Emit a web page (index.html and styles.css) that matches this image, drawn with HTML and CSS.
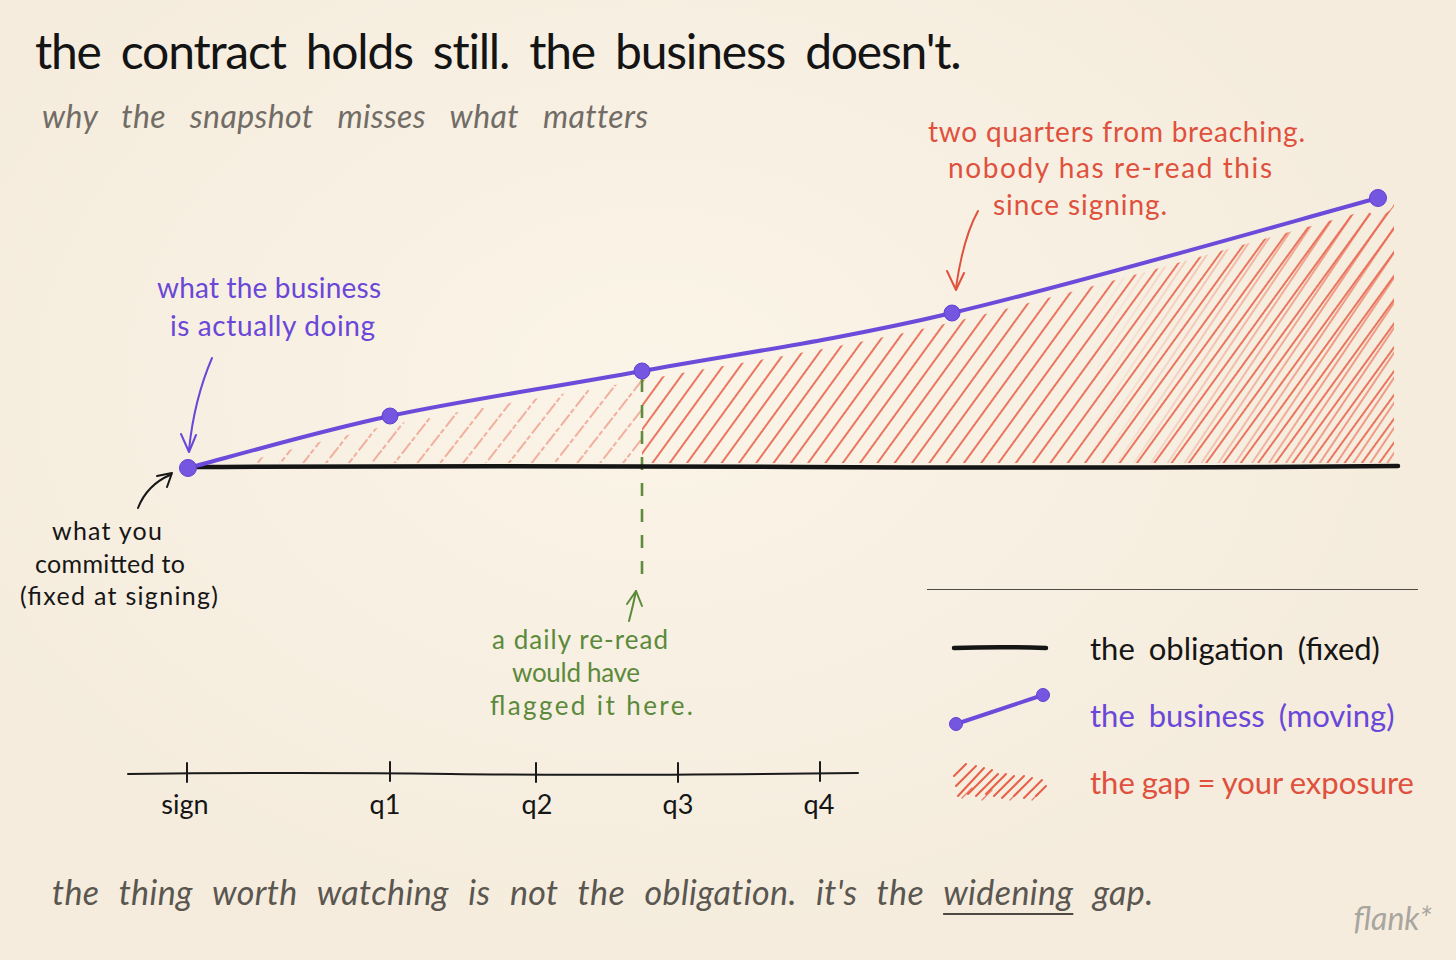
FILE: index.html
```html
<!DOCTYPE html>
<html lang="en">
<head>
<meta charset="utf-8">
<title>the contract holds still. the business doesn't.</title>
<link rel="stylesheet" href="styles.css">
</head>
<body>
<main class="sheet">
  <header class="head">
    <h1 class="title">the contract holds still. the business doesn't.</h1>
    <p class="subtitle">why the snapshot misses what matters</p>
  </header>

  <figure class="chart">
    <svg class="plot" width="1456" height="700" viewBox="0 150 1456 700" xmlns="http://www.w3.org/2000/svg">
      <defs>
        <pattern id="hA" width="18" height="24" patternUnits="userSpaceOnUse" patternTransform="rotate(38)">
          <line x1="2" y1="0" x2="2" y2="24" class="hatch-light"/>
        </pattern>
        <pattern id="hB" width="14" height="40" patternUnits="userSpaceOnUse" patternTransform="rotate(36)">
          <line x1="2" y1="0" x2="2" y2="40" class="hatch-strong"/>
        </pattern>
        <pattern id="hC" width="14" height="40" patternUnits="userSpaceOnUse" patternTransform="rotate(34)">
          <line x1="9" y1="0" x2="9" y2="40" class="hatch-extra"/>
        </pattern>
        <linearGradient id="fadeGrad" gradientUnits="userSpaceOnUse" x1="1090" y1="0" x2="1330" y2="0">
          <stop offset="0" stop-color="#000"/>
          <stop offset="1" stop-color="#fff"/>
        </linearGradient>
        <mask id="fadeMask" maskUnits="userSpaceOnUse" x="1000" y="150" width="456" height="400">
          <rect x="1000" y="150" width="456" height="400" fill="url(#fadeGrad)"/>
        </mask>
        <mask id="gapMask" maskUnits="userSpaceOnUse" x="0" y="150" width="1456" height="700">
          <path class="mask-fill" d="M188,468 C221.7,459.3 314.3,432.2 390,416 C465.7,399.8 548.3,388.2 642,371 C735.7,353.8 829.3,341.8 952,313 C1074.7,284.2 1307,217.2 1378,198 L1394,204 L1394,463 L188,463 Z"/>
          <path class="mask-cut" d="M188,468 C221.7,459.3 314.3,432.2 390,416 C465.7,399.8 548.3,388.2 642,371 C735.7,353.8 829.3,341.8 952,313 C1074.7,284.2 1307,217.2 1378,198"/>
          <circle cx="1378" cy="198" r="17" class="mask-dot"/>
        </mask>
      </defs>

      <!-- the gap -->
      <g mask="url(#gapMask)">
        <rect x="188" y="180" width="454" height="290" fill="url(#hA)" class="zone-light"/>
        <rect x="642" y="180" width="760" height="290" fill="url(#hB)"/>
        <rect x="1090" y="180" width="312" height="290" fill="url(#hC)" mask="url(#fadeMask)"/>
      </g>

      <!-- dashed re-read marker -->
      <path class="dash" d="M642,379 L642,581"/>

      <!-- obligation -->
      <path class="obligation" d="M188,467 Q500,465.5 800,467 T1398,466"/>

      <!-- business -->
      <path class="business" d="M188,468 C221.7,459.3 314.3,432.2 390,416 C465.7,399.8 548.3,388.2 642,371 C735.7,353.8 829.3,341.8 952,313 C1074.7,284.2 1307,217.2 1378,198"/>
      <circle class="dot" cx="188" cy="468" r="8.5"/>
      <circle class="dot" cx="390" cy="416" r="8"/>
      <circle class="dot" cx="642" cy="371" r="8"/>
      <circle class="dot" cx="952" cy="313" r="8"/>
      <circle class="dot" cx="1378" cy="198" r="8.5"/>

      <!-- red note -->
      <text class="note red" x="928" y="142" textLength="377" lengthAdjust="spacing">two quarters from breaching.</text>
      <text class="note red" x="948" y="178" textLength="324" lengthAdjust="spacing">nobody has re-read this</text>
      <text class="note red" x="993" y="215" textLength="174" lengthAdjust="spacing">since signing.</text>
      <path class="arrow red-stroke" d="M978,211 Q963,238 956,288"/>
      <path class="arrow red-stroke" d="M947,271 L956,290 L964,273"/>

      <!-- purple note -->
      <text class="note purple" x="157" y="298" textLength="224" lengthAdjust="spacing">what the business</text>
      <text class="note purple" x="170" y="336" textLength="205" lengthAdjust="spacing">is actually doing</text>
      <path class="arrow purple-stroke" d="M212,358 Q194,400 189,450"/>
      <path class="arrow purple-stroke" d="M181,434 L189,452 L196,435"/>

      <!-- black note -->
      <text class="note ink small" x="52" y="540" textLength="110" lengthAdjust="spacing">what you</text>
      <text class="note ink small" x="35" y="573" textLength="150" lengthAdjust="spacing">committed to</text>
      <text class="note ink small" x="20" y="605" textLength="198" lengthAdjust="spacing">(fixed at signing)</text>
      <path class="arrow ink-stroke" d="M138,508 Q147,485 170,475"/>
      <path class="arrow ink-stroke" d="M157,476 L172,473 L167,487"/>

      <!-- green note -->
      <text class="note green" x="492" y="649" textLength="176" lengthAdjust="spacing">a daily re-read</text>
      <text class="note green" x="512" y="682" textLength="128" lengthAdjust="spacing">would have</text>
      <text class="note green" x="490" y="715" textLength="203" lengthAdjust="spacing">flagged it here.</text>
      <path class="arrow green-stroke" d="M629,621 Q633,606 636,591"/>
      <path class="arrow green-stroke" d="M627,604 L636,591 L642,606"/>

      <!-- time axis -->
      <path class="axis" d="M128,774 Q300,772 450,774 T858,773"/>
      <path class="tick" d="M187,763 V782 M390,762 V781 M536,763 V782 M678,763 V782 M820,762 V781"/>
      <text class="axis-label" x="185" y="814" text-anchor="middle">sign</text>
      <text class="axis-label" x="385" y="814" text-anchor="middle">q1</text>
      <text class="axis-label" x="537" y="814" text-anchor="middle">q2</text>
      <text class="axis-label" x="678" y="814" text-anchor="middle">q3</text>
      <text class="axis-label" x="819" y="814" text-anchor="middle">q4</text>
    </svg>

    <ul class="legend">
      <li class="legend-row">
        <svg class="swatch" width="96" height="36" viewBox="0 0 96 36"><path class="sw-line" d="M2,18 Q48,16.5 94,18"/></svg>
        <span class="legend-text ink-text">the obligation (fixed)</span>
      </li>
      <li class="legend-row">
        <svg class="swatch" width="96" height="36" viewBox="0 0 96 36"><path class="sw-biz" d="M4,27 L91,-2"/><circle class="dot" cx="4" cy="27" r="6.5"/><circle class="dot" cx="91" cy="-2" r="6.5"/></svg>
        <span class="legend-text purple-text">the business (moving)</span>
      </li>
      <li class="legend-row">
        <svg class="swatch" width="96" height="36" viewBox="0 0 96 36">
          <path class="sw-hatch" d="M2,12 L14,0 M4,22 L24,2 M6,32 L32,4 M16,30 L40,6 M24,32 L46,10 M34,30 L54,10 M42,32 L62,12 M50,34 L72,12 M62,32 L80,14 M72,34 L90,16 M84,32 L94,22"/>
          <path class="sw-hatch thin" d="M10,34 L20,24 M30,36 L40,26 M58,36 L66,28 M80,36 L86,30"/>
        </svg>
        <span class="legend-text red-text tight">the gap = your exposure</span>
      </li>
    </ul>
  </figure>

  <footer class="foot">
    <p class="moral">the thing worth watching is not the obligation. it's the <span class="underlined">widening</span> gap.</p>
    <span class="sig">flank*</span>
  </footer>
</main>
</body>
</html>
```

FILE: styles.css
```css
* { box-sizing: border-box; }

html, body {
  margin: 0;
  padding: 0;
}

body {
  background: #f6eee0;
  font-family: Lato, "Open Sans", "DejaVu Sans", sans-serif;
  color: #151515;
}

.sheet {
  width: 1456px;
  height: 960px;
  display: grid;
  grid-template-rows: 150px 700px 110px;
  background:
    radial-gradient(ellipse at 45% 40%, rgba(255, 250, 240, 0.55), rgba(246, 238, 224, 0) 70%),
    #f5ecdd;
  overflow: hidden;
}

/* header */
.head {
  padding: 23px 0 0 35px;
  display: flex;
  flex-direction: column;
}

.title {
  margin: 0;
  font-family: Lato, sans-serif;
  font-weight: 400;
  font-size: 48px;
  line-height: 56px;
  letter-spacing: -1.2px;
  word-spacing: 9px;
  color: #141414;
}

.subtitle {
  margin: 19px 0 0 7px;
  font-family: Lato, sans-serif;
  font-style: italic;
  font-size: 32px;
  line-height: 36px;
  letter-spacing: 0.4px;
  word-spacing: 16px;
  color: #716c66;
}

/* chart */
.chart {
  margin: 0;
  position: relative;
}

.plot {
  display: block;
  overflow: visible;
}

.hatch-light {
  stroke: #e9634d;
  stroke-width: 1.3;
  stroke-dasharray: 14 3 5 2;
}
.zone-light { opacity: 0.72; }

.hatch-strong {
  stroke: #e85f48;
  stroke-width: 1.7;
}

.hatch-extra {
  stroke: #ea6a53;
  stroke-width: 1.4;
  opacity: 0.9;
}

.mask-fill { fill: #fff; }
.mask-cut { fill: none; stroke: #000; stroke-width: 18; stroke-linecap: round; }
.mask-dot { fill: #000; }

.dash {
  fill: none;
  stroke: #5f8b3f;
  stroke-width: 2.6;
  stroke-dasharray: 13 13;
}

.obligation {
  fill: none;
  stroke: #151515;
  stroke-width: 4.5;
  stroke-linecap: round;
}

.business {
  fill: none;
  stroke: #6c4bdb;
  stroke-width: 4;
  stroke-linecap: round;
}

.dot {
  fill: #7556e0;
  stroke: #6340d3;
  stroke-width: 1;
}

.note {
  font-family: Lato, sans-serif;
  font-size: 28px;
}
.note.small { font-size: 25px; }

.red { fill: #e0513d; }
.purple { fill: #6a47d8; }
.ink { fill: #161616; }
.green { fill: #5c8a3b; font-size: 26px; }

.arrow {
  fill: none;
  stroke-width: 2;
  stroke-linecap: round;
  stroke-linejoin: round;
}
.red-stroke { stroke: #e0513d; }
.purple-stroke { stroke: #6a47d8; }
.ink-stroke { stroke: #161616; }
.green-stroke { stroke: #5c8a3b; }

.axis {
  fill: none;
  stroke: #1a1a1a;
  stroke-width: 2;
  stroke-linecap: round;
}
.tick {
  fill: none;
  stroke: #1a1a1a;
  stroke-width: 2;
  stroke-linecap: round;
}
.axis-label {
  font-family: Lato, sans-serif;
  font-size: 27px;
  fill: #151515;
}

/* legend */
.legend {
  position: absolute;
  left: 927px;
  top: 439px;
  width: 491px;
  margin: 0;
  padding: 40px 0 0 25px;
  list-style: none;
  border-top: 1.5px solid #4e4a45;
  display: flex;
  flex-direction: column;
  gap: 31px;
}

.legend-row {
  display: flex;
  align-items: center;
  gap: 42px;
  height: 36px;
}

.swatch {
  display: block;
  flex: none;
  overflow: visible;
}

.sw-line {
  fill: none;
  stroke: #151515;
  stroke-width: 4.5;
  stroke-linecap: round;
}
.sw-biz {
  fill: none;
  stroke: #6c4bdb;
  stroke-width: 4;
  stroke-linecap: round;
}
.sw-hatch {
  fill: none;
  stroke: #e85f48;
  stroke-width: 2;
  stroke-linecap: round;
}
.sw-hatch.thin { stroke-width: 1.3; opacity: 0.8; }

.legend-text {
  font-family: Lato, sans-serif;
  font-size: 31px;
  line-height: 36px;
  word-spacing: 6px;
  white-space: nowrap;
}
.legend-text.tight { word-spacing: -1px; }
.ink-text { color: #151515; }
.purple-text { color: #6a47d8; }
.red-text { color: #e0513d; }

/* footer */
.foot {
  display: flex;
  justify-content: space-between;
  align-items: flex-start;
  padding: 22px 24px 0 52px;
}

.moral {
  margin: 0;
  font-family: Lato, sans-serif;
  font-style: italic;
  font-size: 34px;
  line-height: 40px;
  letter-spacing: 0.4px;
  word-spacing: 11px;
  color: #5a5650;
}

.underlined {
  text-decoration: underline;
  text-decoration-color: #4c4843;
  text-decoration-thickness: 2px;
  text-underline-offset: 8px;
  text-decoration-skip-ink: none;
}

.sig {
  margin-top: 27px;
  font-family: Lato, sans-serif;
  font-style: italic;
  font-size: 32px;
  line-height: 38px;
  color: #a9a59f;
}
```
